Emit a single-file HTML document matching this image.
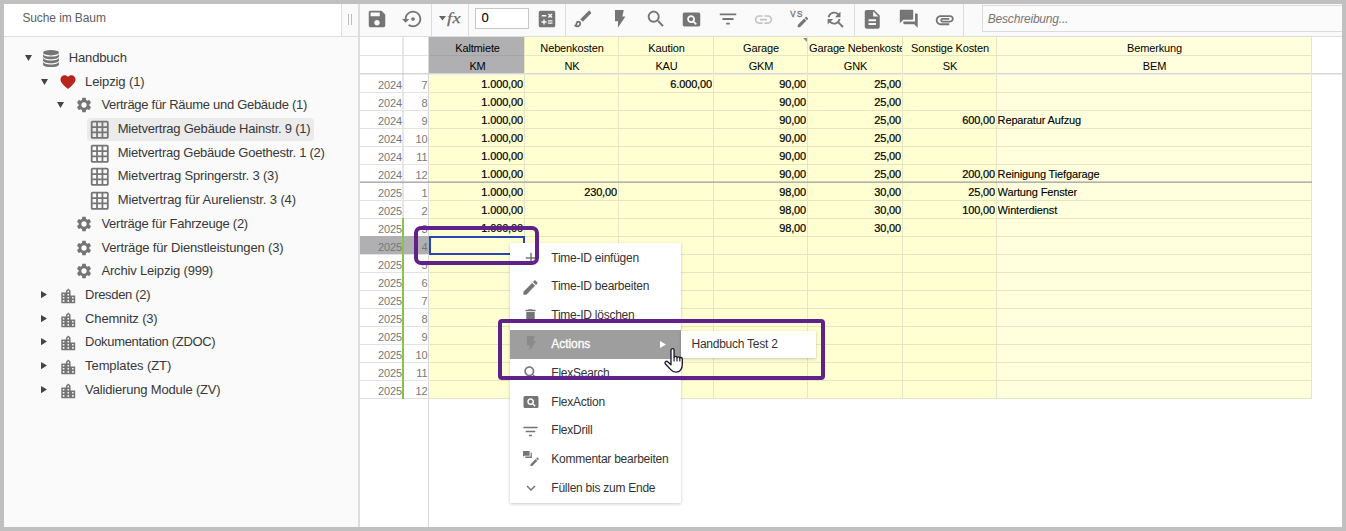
<!DOCTYPE html>
<html><head><meta charset="utf-8"><title>Handbuch</title>
<style>
html,body{margin:0;padding:0}
body{width:1346px;height:531px;overflow:hidden;background:#c0c0c0;position:relative;font-family:"Liberation Sans",sans-serif;}
div,span,svg{position:absolute;box-sizing:border-box}
.ic{display:block;overflow:visible}
#app{left:4px;top:4px;width:1338px;height:523px;background:#fff;overflow:hidden}
.t{white-space:nowrap;font-size:13px;letter-spacing:-0.25px;color:#383838;line-height:15px;height:15px}
.h{white-space:nowrap;overflow:hidden;font-size:11px;letter-spacing:-0.14px;color:#000;text-align:center;line-height:18px;height:18px}
.c{white-space:nowrap;overflow:hidden;font-size:11px;letter-spacing:-0.14px;color:#000;line-height:18px;height:18px;-webkit-text-stroke:0.12px #000}
.r{text-align:right;-webkit-text-stroke:0.22px #000}
.rl{white-space:nowrap;font-size:11px;letter-spacing:-0.1px;color:#777;text-align:right;line-height:18px;height:18px}
.m{white-space:nowrap;font-size:12px;letter-spacing:-0.25px;color:#333;line-height:16px;height:16px}
</style></head><body>
<div id="app">

<div style="left:0;top:0;width:337px;height:32px;background:#fff"></div>
<div style="left:0;top:32px;width:355px;height:1px;background:#ddd"></div>
<div style="left:0;top:33px;width:354px;height:490px;background:#fafafa"></div>
<div class="t" style="left:18.4px;top:6px;font-size:12px;line-height:16px;letter-spacing:-0.1px;color:#606060">Suche im Baum</div>
<div style="left:337px;top:0;width:1px;height:32px;background:#ddd"></div>
<div style="left:338px;top:0;width:16px;height:32px;background:#fafafa"></div>
<div style="left:344px;top:9.5px;width:1.3px;height:11.5px;background:#bcbcbc"></div>
<div style="left:347px;top:9.5px;width:1.3px;height:11.5px;background:#bcbcbc"></div>
<div style="left:354px;top:0;width:2px;height:523px;background:#dedede"></div>
<div style="left:83px;top:114px;width:227px;height:23px;background:#ebebeb;border-radius:4px"></div>
<svg class="ic" style="left:20.5px;top:50.8px;width:7px;height:6px" viewBox="0 0 7 6"><path fill="#444" d="M0 0h7L3.5 6z"/></svg>
<svg class="ic" style="left:39px;top:46.4px;width:16px;height:18px" viewBox="0 0 16 18"><g fill="#757575"><ellipse cx="8" cy="2.7" rx="8" ry="2.7"/><path d="M0 3.9c0 1.530 3.600 2.700 8 2.700s8-1.170 8-2.700v2.7c0 1.530-3.600 2.700-8 2.700s-8-1.170-8-2.700z"/><path d="M0 7.8c0 1.530 3.600 2.700 8 2.700s8-1.170 8-2.700v2.7c0 1.530-3.600 2.700-8 2.700s-8-1.170-8-2.700z"/><path d="M0 11.7c0 1.530 3.600 2.700 8 2.700s8-1.170 8-2.700v2.7c0 1.530-3.600 2.700-8 2.700s-8-1.170-8-2.700z"/></g></svg>
<div class="t" style="left:64.8px;top:46px;letter-spacing:-0.169px">Handbuch</div>
<svg class="ic" style="left:36.7px;top:74.8px;width:7px;height:6px" viewBox="0 0 7 6"><path fill="#444" d="M0 0h7L3.5 6z"/></svg>
<svg class="ic" style="left:54.60px;top:68.80px;width:18px;height:18px" viewBox="0 0 24 24"><path fill="#b8241c" fill-rule="evenodd" d="M12 21.350l-1.450-1.320C5.400 15.360 2 12.280 2 8.500 2 5.420 4.420 3 7.500 3c1.740 0 3.410.810 4.500 2.090C13.090 3.810 14.760 3 16.500 3 19.580 3 22 5.420 22 8.500c0 3.780-3.400 6.860-8.550 11.540L12 21.350z"/></svg>
<div class="t" style="left:81.1px;top:70px;letter-spacing:-0.12px">Leipzig (1)</div>
<svg class="ic" style="left:52.9px;top:97.8px;width:7px;height:6px" viewBox="0 0 7 6"><path fill="#444" d="M0 0h7L3.5 6z"/></svg>
<svg class="ic" style="left:70.60px;top:92.40px;width:18px;height:18px" viewBox="0 0 24 24"><path fill="#757575" fill-rule="evenodd" d="M19.140 12.940c.040-.300.060-.610.060-.940 0-.320-.020-.640-.070-.940l2.030-1.580c.180-.140.230-.410.120-.610l-1.920-3.320c-.120-.220-.370-.290-.590-.220l-2.390.960c-.500-.380-1.030-.700-1.620-.940l-.360-2.540c-.040-.240-.240-.410-.480-.410h-3.840c-.240 0-.430.170-.470.410l-.360 2.540c-.590.240-1.130.570-1.620.940l-2.390-.960c-.220-.080-.470 0-.590.220L2.740 8.870c-.120.210-.080.470.120.610l2.030 1.580c-.050.300-.090.630-.090.940s.020.640.070.940l-2.030 1.580c-.180.140-.230.410-.120.610l1.920 3.320c.120.220.370.290.590.220l2.390-.960c.500.380 1.030.700 1.620.940l.360 2.540c.050.240.240.410.480.410h3.840c.240 0 .440-.170.470-.410l.360-2.540c.590-.240 1.130-.560 1.620-.940l2.390.960c.220.080.470 0 .590-.220l1.920-3.320c.120-.220.070-.470-.120-.610l-2.010-1.580zM12 15.600c-1.980 0-3.600-1.620-3.600-3.600s1.620-3.600 3.600-3.600 3.600 1.620 3.600 3.600-1.620 3.600-3.600 3.600z"/></svg>
<div class="t" style="left:97.4px;top:93px;letter-spacing:-0.287px">Verträge für Räume und Gebäude (1)</div>
<svg class="ic" style="left:85.15px;top:115.05px;width:21.5px;height:21.5px" viewBox="0 0 24 24"><path fill="#757575" fill-rule="evenodd" d="M20 2H4c-1.100 0-2 .900-2 2v16c0 1.100.900 2 2 2h16c1.100 0 2-.900 2-2V4c0-1.100-.900-2-2-2zM8 20H4v-4h4v4zm0-6H4v-4h4v4zm0-6H4V4h4v4zm6 12h-4v-4h4v4zm0-6h-4v-4h4v4zm0-6h-4V4h4v4zm6 12h-4v-4h4v4zm0-6h-4v-4h4v4zm0-6h-4V4h4v4z"/></svg>
<div class="t" style="left:113.7px;top:117px;letter-spacing:-0.217px">Mietvertrag Gebäude Hainstr. 9 (1)</div>
<svg class="ic" style="left:85.15px;top:139.05px;width:21.5px;height:21.5px" viewBox="0 0 24 24"><path fill="#757575" fill-rule="evenodd" d="M20 2H4c-1.100 0-2 .900-2 2v16c0 1.100.900 2 2 2h16c1.100 0 2-.900 2-2V4c0-1.100-.900-2-2-2zM8 20H4v-4h4v4zm0-6H4v-4h4v4zm0-6H4V4h4v4zm6 12h-4v-4h4v4zm0-6h-4v-4h4v4zm0-6h-4V4h4v4zm6 12h-4v-4h4v4zm0-6h-4v-4h4v4zm0-6h-4V4h4v4z"/></svg>
<div class="t" style="left:113.7px;top:141px;letter-spacing:-0.253px">Mietvertrag Gebäude Goethestr. 1 (2)</div>
<svg class="ic" style="left:85.15px;top:162.05px;width:21.5px;height:21.5px" viewBox="0 0 24 24"><path fill="#757575" fill-rule="evenodd" d="M20 2H4c-1.100 0-2 .900-2 2v16c0 1.100.900 2 2 2h16c1.100 0 2-.900 2-2V4c0-1.100-.900-2-2-2zM8 20H4v-4h4v4zm0-6H4v-4h4v4zm0-6H4V4h4v4zm6 12h-4v-4h4v4zm0-6h-4v-4h4v4zm0-6h-4V4h4v4zm6 12h-4v-4h4v4zm0-6h-4v-4h4v4zm0-6h-4V4h4v4z"/></svg>
<div class="t" style="left:113.7px;top:164px;letter-spacing:-0.16px">Mietvertrag Springerstr. 3 (3)</div>
<svg class="ic" style="left:85.15px;top:186.05px;width:21.5px;height:21.5px" viewBox="0 0 24 24"><path fill="#757575" fill-rule="evenodd" d="M20 2H4c-1.100 0-2 .900-2 2v16c0 1.100.900 2 2 2h16c1.100 0 2-.900 2-2V4c0-1.100-.900-2-2-2zM8 20H4v-4h4v4zm0-6H4v-4h4v4zm0-6H4V4h4v4zm6 12h-4v-4h4v4zm0-6h-4v-4h4v4zm0-6h-4V4h4v4zm6 12h-4v-4h4v4zm0-6h-4v-4h4v4zm0-6h-4V4h4v4z"/></svg>
<div class="t" style="left:113.7px;top:188px;letter-spacing:-0.112px">Mietvertrag für Aurelienstr. 3 (4)</div>
<svg class="ic" style="left:70.60px;top:211.40px;width:18px;height:18px" viewBox="0 0 24 24"><path fill="#757575" fill-rule="evenodd" d="M19.140 12.940c.040-.300.060-.610.060-.940 0-.320-.020-.640-.070-.940l2.030-1.580c.180-.140.230-.410.120-.610l-1.920-3.320c-.120-.220-.370-.290-.590-.220l-2.390.960c-.500-.380-1.030-.700-1.620-.940l-.360-2.540c-.040-.240-.240-.410-.480-.410h-3.840c-.240 0-.430.170-.470.410l-.360 2.540c-.590.240-1.130.570-1.620.940l-2.390-.960c-.220-.080-.470 0-.590.220L2.740 8.870c-.120.210-.080.470.120.610l2.030 1.580c-.050.300-.090.630-.090.940s.020.640.070.940l-2.030 1.580c-.180.140-.230.410-.120.610l1.920 3.320c.120.220.370.290.590.220l2.390-.960c.500.380 1.030.700 1.620.940l.360 2.540c.050.240.240.410.480.410h3.840c.240 0 .440-.170.470-.410l.360-2.540c.590-.240 1.130-.560 1.620-.940l2.390.960c.220.080.470 0 .590-.220l1.920-3.320c.120-.220.070-.470-.120-.610l-2.010-1.580zM12 15.600c-1.980 0-3.600-1.620-3.600-3.600s1.620-3.600 3.600-3.600 3.600 1.620 3.600 3.600-1.620 3.600-3.600 3.600z"/></svg>
<div class="t" style="left:97.4px;top:212px;letter-spacing:-0.256px">Verträge für Fahrzeuge (2)</div>
<svg class="ic" style="left:70.60px;top:235.40px;width:18px;height:18px" viewBox="0 0 24 24"><path fill="#757575" fill-rule="evenodd" d="M19.140 12.940c.040-.300.060-.610.060-.940 0-.320-.020-.640-.070-.940l2.030-1.580c.180-.140.230-.410.120-.610l-1.920-3.320c-.120-.220-.370-.290-.590-.220l-2.390.960c-.500-.380-1.030-.700-1.620-.940l-.360-2.540c-.040-.240-.240-.410-.480-.410h-3.840c-.240 0-.430.170-.470.410l-.360 2.540c-.590.240-1.130.570-1.620.940l-2.390-.960c-.220-.080-.470 0-.590.220L2.740 8.870c-.120.210-.080.470.120.610l2.030 1.580c-.050.300-.090.630-.090.940s.020.640.070.940l-2.030 1.580c-.180.140-.230.410-.120.610l1.920 3.320c.120.220.370.290.590.220l2.390-.960c.500.380 1.030.700 1.620.940l.360 2.540c.050.240.240.410.480.410h3.840c.240 0 .440-.170.470-.410l.360-2.540c.590-.240 1.130-.560 1.620-.940l2.390.960c.220.080.470 0 .590-.220l1.920-3.320c.120-.220.070-.470-.120-.610l-2.010-1.580zM12 15.600c-1.980 0-3.600-1.620-3.600-3.600s1.620-3.600 3.600-3.600 3.600 1.620 3.600 3.600-1.620 3.600-3.600 3.600z"/></svg>
<div class="t" style="left:97.4px;top:236px;letter-spacing:-0.155px">Verträge für Dienstleistungen (3)</div>
<svg class="ic" style="left:70.60px;top:258.40px;width:18px;height:18px" viewBox="0 0 24 24"><path fill="#757575" fill-rule="evenodd" d="M19.140 12.940c.040-.300.060-.610.060-.940 0-.320-.020-.640-.070-.940l2.030-1.580c.180-.140.230-.410.120-.610l-1.920-3.320c-.120-.220-.370-.290-.590-.220l-2.390.960c-.500-.380-1.030-.700-1.620-.940l-.360-2.540c-.040-.240-.240-.410-.480-.410h-3.840c-.240 0-.430.170-.470.410l-.360 2.540c-.590.240-1.130.570-1.620.940l-2.390-.960c-.220-.080-.470 0-.590.220L2.740 8.870c-.120.210-.080.470.120.610l2.030 1.580c-.050.300-.090.630-.090.940s.020.640.070.940l-2.030 1.580c-.180.140-.230.410-.120.610l1.920 3.320c.120.220.370.290.590.220l2.390-.960c.500.380 1.030.700 1.620.940l.360 2.540c.050.240.240.410.480.410h3.840c.240 0 .440-.170.470-.410l.360-2.540c.590-.240 1.130-.560 1.620-.940l2.390.960c.220.080.470 0 .590-.220l1.920-3.320c.120-.220.070-.470-.120-.610l-2.010-1.580zM12 15.600c-1.980 0-3.600-1.620-3.600-3.600s1.620-3.600 3.600-3.600 3.600 1.620 3.600 3.600-1.620 3.600-3.600 3.600z"/></svg>
<div class="t" style="left:97.4px;top:259px;letter-spacing:-0.163px">Archiv Leipzig (999)</div>
<svg class="ic" style="left:37.2px;top:287.2px;width:6px;height:7.2px" viewBox="0 0 6 7.2"><path fill="#444" d="M0 0v7.2L6 3.6z"/></svg>
<svg class="ic" style="left:54.85px;top:282.65px;width:18.5px;height:18.5px" viewBox="0 0 24 24"><path fill="#757575" fill-rule="evenodd" d="M15 11V5l-3-3-3 3v2H3v14h18V11h-6zm-8 8H5v-2h2v2zm0-4H5v-2h2v2zm0-4H5V9h2v2zm6 8h-2v-2h2v2zm0-4h-2v-2h2v2zm0-4h-2V9h2v2zm0-4h-2V5h2v2zm6 12h-2v-2h2v2zm0-4h-2v-2h2v2z"/></svg>
<div class="t" style="left:81.1px;top:283px;letter-spacing:-0.314px">Dresden (2)</div>
<svg class="ic" style="left:37.2px;top:311.2px;width:6px;height:7.2px" viewBox="0 0 6 7.2"><path fill="#444" d="M0 0v7.2L6 3.6z"/></svg>
<svg class="ic" style="left:54.85px;top:306.65px;width:18.5px;height:18.5px" viewBox="0 0 24 24"><path fill="#757575" fill-rule="evenodd" d="M15 11V5l-3-3-3 3v2H3v14h18V11h-6zm-8 8H5v-2h2v2zm0-4H5v-2h2v2zm0-4H5V9h2v2zm6 8h-2v-2h2v2zm0-4h-2v-2h2v2zm0-4h-2V9h2v2zm0-4h-2V5h2v2zm6 12h-2v-2h2v2zm0-4h-2v-2h2v2z"/></svg>
<div class="t" style="left:81.1px;top:307px;letter-spacing:-0.165px">Chemnitz (3)</div>
<svg class="ic" style="left:37.2px;top:334.2px;width:6px;height:7.2px" viewBox="0 0 6 7.2"><path fill="#444" d="M0 0v7.2L6 3.6z"/></svg>
<svg class="ic" style="left:54.85px;top:329.65px;width:18.5px;height:18.5px" viewBox="0 0 24 24"><path fill="#757575" fill-rule="evenodd" d="M15 11V5l-3-3-3 3v2H3v14h18V11h-6zm-8 8H5v-2h2v2zm0-4H5v-2h2v2zm0-4H5V9h2v2zm6 8h-2v-2h2v2zm0-4h-2v-2h2v2zm0-4h-2V9h2v2zm0-4h-2V5h2v2zm6 12h-2v-2h2v2zm0-4h-2v-2h2v2z"/></svg>
<div class="t" style="left:81.1px;top:330px;letter-spacing:-0.313px">Dokumentation (ZDOC)</div>
<svg class="ic" style="left:37.2px;top:358.2px;width:6px;height:7.2px" viewBox="0 0 6 7.2"><path fill="#444" d="M0 0v7.2L6 3.6z"/></svg>
<svg class="ic" style="left:54.85px;top:353.65px;width:18.5px;height:18.5px" viewBox="0 0 24 24"><path fill="#757575" fill-rule="evenodd" d="M15 11V5l-3-3-3 3v2H3v14h18V11h-6zm-8 8H5v-2h2v2zm0-4H5v-2h2v2zm0-4H5V9h2v2zm6 8h-2v-2h2v2zm0-4h-2v-2h2v2zm0-4h-2V9h2v2zm0-4h-2V5h2v2zm6 12h-2v-2h2v2zm0-4h-2v-2h2v2z"/></svg>
<div class="t" style="left:81.1px;top:354px;letter-spacing:-0.093px">Templates (ZT)</div>
<svg class="ic" style="left:37.2px;top:382.2px;width:6px;height:7.2px" viewBox="0 0 6 7.2"><path fill="#444" d="M0 0v7.2L6 3.6z"/></svg>
<svg class="ic" style="left:54.85px;top:377.65px;width:18.5px;height:18.5px" viewBox="0 0 24 24"><path fill="#757575" fill-rule="evenodd" d="M15 11V5l-3-3-3 3v2H3v14h18V11h-6zm-8 8H5v-2h2v2zm0-4H5v-2h2v2zm0-4H5V9h2v2zm6 8h-2v-2h2v2zm0-4h-2v-2h2v2zm0-4h-2V9h2v2zm0-4h-2V5h2v2zm6 12h-2v-2h2v2zm0-4h-2v-2h2v2z"/></svg>
<div class="t" style="left:81.1px;top:378px;letter-spacing:-0.165px">Validierung Module (ZV)</div>
<div style="left:356px;top:0;width:982px;height:32px;background:#fafafa"></div>
<div style="left:355px;top:32px;width:983px;height:1px;background:#ddd"></div>
<div style="left:427.0px;top:0;width:1px;height:32px;background:#ddd"></div>
<div style="left:464.0px;top:0;width:1px;height:32px;background:#ddd"></div>
<div style="left:561.0px;top:0;width:1px;height:32px;background:#ddd"></div>
<div style="left:850.0px;top:0;width:1px;height:32px;background:#ddd"></div>
<div style="left:959.0px;top:0;width:1px;height:32px;background:#ddd"></div>
<svg class="ic" style="left:362.00px;top:4.00px;width:22px;height:22px" viewBox="0 0 24 24"><path fill="#757575" fill-rule="evenodd" d="M17 3H5c-1.11 0-2 .9-2 2v14c0 1.1.89 2 2 2h14c1.1 0 2-.9 2-2V7l-4-4zm-5 16c-1.66 0-3-1.34-3-3s1.34-3 3-3 3 1.34 3 3-1.34 3-3 3zm3-10H5V5h10v4z"/></svg>
<svg class="ic" style="left:397.60px;top:4.00px;width:22px;height:22px" viewBox="0 0 24 24"><path fill="#757575" fill-rule="evenodd" d="M14 12c0-1.1-.9-2-2-2s-2 .9-2 2 .9 2 2 2 2-.9 2-2zm-2-9c-4.97 0-9 4.03-9 9H0l4 4 4-4H5c0-3.87 3.13-7 7-7s7 3.13 7 7-3.13 7-7 7c-1.51 0-2.91-.49-4.06-1.3l-1.42 1.44C8.04 20.3 9.94 21 12 21c4.97 0 9-4.03 9-9s-4.03-9-9-9z"/></svg>
<svg class="ic" style="left:531.90px;top:4.00px;width:22px;height:22px" viewBox="0 0 24 24"><path fill="#757575" fill-rule="evenodd" d="M19 3H5c-1.1 0-2 .9-2 2v14c0 1.1.9 2 2 2h14c1.1 0 2-.9 2-2V5c0-1.1-.9-2-2-2zm-5.970 4.060L14.090 6l1.410 1.410L16.910 6l1.060 1.060-1.410 1.410 1.410 1.410-1.060 1.060-1.410-1.400-1.410 1.410-1.060-1.060 1.410-1.410-1.410-1.420zm-6.780.660h5v1.500h-5v-1.500zM11.500 16h-2v2H8v-2H6v-1.500h2v-2h1.500v2h2V16zm6.500 1.250h-5v-1.500h5v1.500zm0-2.500h-5v-1.500h5v1.500z"/></svg>
<svg class="ic" style="left:568.30px;top:4.00px;width:22px;height:22px" viewBox="0 0 24 24"><path fill="#757575" fill-rule="evenodd" d="M7 16c.550 0 1 .450 1 1 0 1.100-.900 2-2 2-.170 0-.330-.020-.500-.050.310-.550.500-1.210.500-1.950 0-.550.450-1 1-1zM18.670 3c-.260 0-.510.100-.710.290L9 12.250 11.750 15l8.960-8.960c.390-.390.390-1.020 0-1.410l-1.340-1.340c-.200-.200-.450-.290-.700-.290zM7 14c-1.660 0-3 1.340-3 3 0 1.310-1.160 2-2 2 .920 1.220 2.490 2 4 2 2.210 0 4-1.790 4-4 0-1.660-1.340-3-3-3z"/></svg>
<svg class="ic" style="left:640.60px;top:4.20px;width:22px;height:22px" viewBox="0 0 24 24"><path fill="#757575" fill-rule="evenodd" d="M15.500 14h-.790l-.280-.270C15.410 12.590 16 11.110 16 9.500 16 5.910 13.090 3 9.500 3S3 5.910 3 9.500 5.910 16 9.500 16c1.610 0 3.090-.590 4.230-1.570l.270.280v.790l5 4.990L20.490 19l-4.990-5zm-6 0C7.010 14 5 11.990 5 9.500S7.010 5 9.500 5 14 7.010 14 9.500 11.990 14 9.500 14z"/></svg>
<svg class="ic" style="left:676.90px;top:4.50px;width:21px;height:21px" viewBox="0 0 24 24"><path fill="#757575" fill-rule="evenodd" d="M11.500 9C10.120 9 9 10.120 9 11.500s1.120 2.500 2.500 2.500 2.500-1.120 2.500-2.500S12.880 9 11.500 9zM20 4H4c-1.100 0-2 .900-2 2v12c0 1.100.900 2 2 2h16c1.100 0 2-.900 2-2V6c0-1.100-.900-2-2-2zm-3.210 14.210l-2.910-2.910c-.690.440-1.510.700-2.390.700C9.010 16 7 13.990 7 11.500S9.010 7 11.500 7 16 9.010 16 11.500c0 .880-.260 1.690-.700 2.390l2.910 2.900-1.420 1.420z"/></svg>
<svg class="ic" style="left:712.50px;top:4.00px;width:22px;height:22px" viewBox="0 0 24 24"><path fill="#757575" fill-rule="evenodd" d="M10 18h4v-2h-4v2zM3 6v2h18V6H3zm3 7h12v-2H6v2z"/></svg>
<svg class="ic" style="left:749.00px;top:4.70px;width:21px;height:21px" viewBox="0 0 24 24"><path fill="#c4c4c4" fill-rule="evenodd" d="M3.900 12c0-1.710 1.390-3.100 3.100-3.100h4V7H7c-2.760 0-5 2.240-5 5s2.240 5 5 5h4v-1.900H7c-1.710 0-3.100-1.390-3.100-3.100zM8 13h8v-2H8v2zm9-6h-4v1.900h4c1.710 0 3.100 1.390 3.100 3.100s-1.390 3.100-3.100 3.100h-4V17h4c2.760 0 5-2.240 5-5s-2.240-5-5-5z"/></svg>
<svg class="ic" style="left:820.40px;top:4.00px;width:22px;height:22px" viewBox="0 0 24 24"><path fill="#757575" fill-rule="evenodd" d="M11 6c1.380 0 2.630.560 3.540 1.460L12 10h6V4l-2.050 2.050C14.680 4.780 12.930 4 11 4c-3.530 0-6.430 2.610-6.920 6H6.100c.460-2.280 2.480-4 4.900-4zm5.640 9.140c.660-.900 1.120-1.970 1.280-3.140H15.900c-.460 2.280-2.480 4-4.900 4-1.380 0-2.630-.560-3.540-1.460L10 12H4v6l2.050-2.050C7.320 17.220 9.070 18 11 18c1.550 0 2.980-.510 4.140-1.360L20 21.490 21.490 20l-4.850-4.860z"/></svg>
<svg class="ic" style="left:857.25px;top:3.75px;width:22.5px;height:22.5px" viewBox="0 0 24 24"><path fill="#757575" fill-rule="evenodd" d="M14 2H6c-1.100 0-1.990.900-1.990 2L4 20c0 1.100.890 2 1.990 2H18c1.100 0 2-.900 2-2V8l-6-6zm2 16H8v-2h8v2zm0-4H8v-2h8v2zm-3-5V3.500L18.500 9H13z"/></svg>
<svg class="ic" style="left:893.95px;top:4.25px;width:21.5px;height:21.5px" viewBox="0 0 24 24"><path fill="#757575" fill-rule="evenodd" d="M21 6h-2v9H6v2c0 .550.450 1 1 1h11l4 4V7c0-.550-.450-1-1-1zm-4 6V3c0-.550-.450-1-1-1H3c-.550 0-1 .450-1 1v14l4-4h10c.550 0 1-.450 1-1z"/></svg>
<svg class="ic" style="left:930.25px;top:4.55px;width:21.5px;height:21.5px" viewBox="0 0 24 24"><path fill="#757575" fill-rule="evenodd" d="M2 12.500C2 9.460 4.460 7 7.500 7H18c2.210 0 4 1.790 4 4s-1.790 4-4 4H9.500C8.120 15 7 13.880 7 12.500S8.120 10 9.500 10H17v2H9.410c-.550 0-.550 1 0 1H18c1.100 0 2-.900 2-2s-.900-2-2-2H7.500C5.570 9 4 10.570 4 12.500S5.570 16 7.500 16H17v2H7.500C4.460 18 2 15.540 2 12.500z"/></svg>
<svg class="ic" style="left:610.9px;top:5.6px;width:10.5px;height:17.8px" viewBox="0 0 10.5 17.8"><path fill="#757575" d="M0 0h8.760L7.340 6.500h3.110L2.820 17.800 3.100 11.300H0z"/></svg>
<svg class="ic" style="left:435px;top:12px;width:7px;height:5px" viewBox="0 0 7 5"><path fill="#666" d="M0 0h7L3.500 4.500z"/></svg>
<div style="left:442.8px;top:2.5px;transform:scaleX(1.22);transform-origin:0 0;font-family:'Liberation Serif',serif;font-style:italic;font-size:15px;line-height:22px;color:#6a6a6a;-webkit-text-stroke:0.25px #6a6a6a;letter-spacing:0.3px">fx</div>
<div style="left:471px;top:4px;width:54px;height:21px;background:#fff;border:1px solid #c8c8c8"></div>
<div class="c" style="left:477.5px;top:5px;font-size:13px;line-height:17px;height:17px;letter-spacing:0">0</div>
<svg class="ic" style="left:785.7px;top:5.199999999999999px;width:14px;height:9px" viewBox="0 0 165 90" preserveAspectRatio="none"><text x="2" y="78" font-family="Liberation Sans, sans-serif" font-size="95" fill="#757575" stroke="#757575" stroke-width="4"><tspan>V</tspan><tspan x="82">S</tspan></text></svg>
<svg class="ic" style="left:792.05px;top:10.90px;width:13.9px;height:13.9px" viewBox="0 0 24 24"><path fill="#757575" fill-rule="evenodd" d="M3 17.250V21h3.750L17.810 9.940l-3.750-3.750L3 17.250zM20.710 7.040c.390-.390.390-1.020 0-1.410l-2.340-2.340c-.390-.390-1.020-.390-1.410 0l-1.830 1.830 3.750 3.750 1.830-1.830z"/></svg>
<div style="left:978px;top:1px;width:370px;height:27px;background:#fbfbfb;border:1px solid #dcdcdc"></div>
<div class="t" style="left:983.8px;top:7px;font-size:12px;line-height:16px;font-style:italic;color:#777;letter-spacing:-0.2px">Beschreibung...</div>
<div style="left:398px;top:33px;width:2px;height:362px;background:#e7e7e7"></div>
<div style="left:424px;top:33px;width:1px;height:490px;background:#d8d8d8"></div>
<div style="left:425px;top:33px;width:883px;height:36px;background:#ffffd2"></div>
<div style="left:992px;top:33px;width:316px;height:36px;background:#ffffde"></div>
<div style="left:425px;top:33px;width:95px;height:36px;background:#b0b0b2"></div>
<div style="left:425px;top:71px;width:883px;height:324px;background:#ffffd2"></div>
<div style="left:992px;top:71px;width:316px;height:324px;background:#ffffde"></div>
<div style="left:356px;top:69px;width:982px;height:1px;background:#d6d6d6"></div>
<div style="left:356px;top:70px;width:982px;height:1px;background:rgba(0,0,0,0.07)"></div>
<div style="left:356px;top:51px;width:69px;height:1px;background:#e2e2e2"></div>
<div style="left:520px;top:51px;width:788px;height:1px;background:#e6e6c4"></div>
<div style="left:425px;top:51px;width:95px;height:1px;background:#a4a4a6"></div>
<div style="left:520px;top:33px;width:1px;height:362px;background:#e6e6c4"></div>
<div style="left:614px;top:33px;width:1px;height:362px;background:#e6e6c4"></div>
<div style="left:709px;top:33px;width:1px;height:362px;background:#e6e6c4"></div>
<div style="left:803px;top:33px;width:1px;height:362px;background:#e6e6c4"></div>
<div style="left:898px;top:33px;width:1px;height:362px;background:#e6e6c4"></div>
<div style="left:992px;top:33px;width:1px;height:362px;background:#e6e6c4"></div>
<div style="left:1307px;top:33px;width:1px;height:362px;background:#e6e6c4"></div>
<div style="left:356px;top:88px;width:69px;height:1px;background:#e2e2e2"></div>
<div style="left:425px;top:88px;width:883px;height:1px;background:#e6e6c4"></div>
<div style="left:356px;top:106px;width:69px;height:1px;background:#e2e2e2"></div>
<div style="left:425px;top:106px;width:883px;height:1px;background:#e6e6c4"></div>
<div style="left:356px;top:124px;width:69px;height:1px;background:#e2e2e2"></div>
<div style="left:425px;top:124px;width:883px;height:1px;background:#e6e6c4"></div>
<div style="left:356px;top:142px;width:69px;height:1px;background:#e2e2e2"></div>
<div style="left:425px;top:142px;width:883px;height:1px;background:#e6e6c4"></div>
<div style="left:356px;top:160px;width:69px;height:1px;background:#e2e2e2"></div>
<div style="left:425px;top:160px;width:883px;height:1px;background:#e6e6c4"></div>
<div style="left:356px;top:178px;width:69px;height:1px;background:#e2e2e2"></div>
<div style="left:425px;top:178px;width:883px;height:1px;background:#e6e6c4"></div>
<div style="left:356px;top:196px;width:69px;height:1px;background:#e2e2e2"></div>
<div style="left:425px;top:196px;width:883px;height:1px;background:#e6e6c4"></div>
<div style="left:356px;top:214px;width:69px;height:1px;background:#e2e2e2"></div>
<div style="left:425px;top:214px;width:883px;height:1px;background:#e6e6c4"></div>
<div style="left:356px;top:232px;width:69px;height:1px;background:#e2e2e2"></div>
<div style="left:425px;top:232px;width:883px;height:1px;background:#e6e6c4"></div>
<div style="left:356px;top:250px;width:69px;height:1px;background:#e2e2e2"></div>
<div style="left:425px;top:250px;width:883px;height:1px;background:#e6e6c4"></div>
<div style="left:356px;top:268px;width:69px;height:1px;background:#e2e2e2"></div>
<div style="left:425px;top:268px;width:883px;height:1px;background:#e6e6c4"></div>
<div style="left:356px;top:286px;width:69px;height:1px;background:#e2e2e2"></div>
<div style="left:425px;top:286px;width:883px;height:1px;background:#e6e6c4"></div>
<div style="left:356px;top:304px;width:69px;height:1px;background:#e2e2e2"></div>
<div style="left:425px;top:304px;width:883px;height:1px;background:#e6e6c4"></div>
<div style="left:356px;top:322px;width:69px;height:1px;background:#e2e2e2"></div>
<div style="left:425px;top:322px;width:883px;height:1px;background:#e6e6c4"></div>
<div style="left:356px;top:340px;width:69px;height:1px;background:#e2e2e2"></div>
<div style="left:425px;top:340px;width:883px;height:1px;background:#e6e6c4"></div>
<div style="left:356px;top:358px;width:69px;height:1px;background:#e2e2e2"></div>
<div style="left:425px;top:358px;width:883px;height:1px;background:#e6e6c4"></div>
<div style="left:356px;top:376px;width:69px;height:1px;background:#e2e2e2"></div>
<div style="left:425px;top:376px;width:883px;height:1px;background:#e6e6c4"></div>
<div style="left:356px;top:394px;width:69px;height:1px;background:#e2e2e2"></div>
<div style="left:425px;top:394px;width:883px;height:1px;background:#e6e6c4"></div>
<div style="left:356px;top:177px;width:952px;height:1px;background:rgba(120,120,120,0.35)"></div>
<div style="left:356px;top:178px;width:952px;height:1px;background:#b2b2b2"></div>
<div class="h" style="left:427.0px;top:34.5px;width:93.0px">Kaltmiete</div>
<div class="h" style="left:427.0px;top:52.5px;width:93.0px">KM</div>
<div class="h" style="left:522.0px;top:34.5px;width:92.0px">Nebenkosten</div>
<div class="h" style="left:522.0px;top:52.5px;width:92.0px">NK</div>
<div class="h" style="left:616.0px;top:34.5px;width:93.0px">Kaution</div>
<div class="h" style="left:616.0px;top:52.5px;width:93.0px">KAU</div>
<div class="h" style="left:711.0px;top:34.5px;width:92.0px">Garage</div>
<div class="h" style="left:711.0px;top:52.5px;width:92.0px">GKM</div>
<div class="h" style="left:805.0px;top:34.5px;width:93.0px">Garage Nebenkosten</div>
<div class="h" style="left:805.0px;top:52.5px;width:93.0px">GNK</div>
<div class="h" style="left:900.0px;top:34.5px;width:92.0px">Sonstige Kosten</div>
<div class="h" style="left:900.0px;top:52.5px;width:92.0px">SK</div>
<div class="h" style="left:994.0px;top:34.5px;width:313.0px">Bemerkung</div>
<div class="h" style="left:994.0px;top:52.5px;width:313.0px">BEM</div>
<svg class="ic" style="left:799px;top:33.6px;width:4px;height:4px" viewBox="0 0 4 4"><path fill="#8a8a96" d="M0 0h4v4z"/></svg>
<div class="rl" style="left:358px;top:72px;width:40px">2024</div>
<div class="rl" style="left:401px;top:72px;width:22.5px">7</div>
<div class="c r" style="left:425.0px;top:70.5px;width:94.0px">1.000,00</div>
<div class="c r" style="left:614.0px;top:70.5px;width:94.0px">6.000,00</div>
<div class="c r" style="left:709.0px;top:70.5px;width:93.0px">90,00</div>
<div class="c r" style="left:803.0px;top:70.5px;width:94.0px">25,00</div>
<div class="rl" style="left:358px;top:90px;width:40px">2024</div>
<div class="rl" style="left:401px;top:90px;width:22.5px">8</div>
<div class="c r" style="left:425.0px;top:88.5px;width:94.0px">1.000,00</div>
<div class="c r" style="left:709.0px;top:88.5px;width:93.0px">90,00</div>
<div class="c r" style="left:803.0px;top:88.5px;width:94.0px">25,00</div>
<div class="rl" style="left:358px;top:108px;width:40px">2024</div>
<div class="rl" style="left:401px;top:108px;width:22.5px">9</div>
<div class="c r" style="left:425.0px;top:106.5px;width:94.0px">1.000,00</div>
<div class="c r" style="left:709.0px;top:106.5px;width:93.0px">90,00</div>
<div class="c r" style="left:803.0px;top:106.5px;width:94.0px">25,00</div>
<div class="c r" style="left:898.0px;top:106.5px;width:93.0px">600,00</div>
<div class="c" style="left:993.6px;top:106.5px;width:311.0px">Reparatur Aufzug</div>
<div class="rl" style="left:358px;top:126px;width:40px">2024</div>
<div class="rl" style="left:401px;top:126px;width:22.5px">10</div>
<div class="c r" style="left:425.0px;top:124.5px;width:94.0px">1.000,00</div>
<div class="c r" style="left:709.0px;top:124.5px;width:93.0px">90,00</div>
<div class="c r" style="left:803.0px;top:124.5px;width:94.0px">25,00</div>
<div class="rl" style="left:358px;top:144px;width:40px">2024</div>
<div class="rl" style="left:401px;top:144px;width:22.5px">11</div>
<div class="c r" style="left:425.0px;top:142.5px;width:94.0px">1.000,00</div>
<div class="c r" style="left:709.0px;top:142.5px;width:93.0px">90,00</div>
<div class="c r" style="left:803.0px;top:142.5px;width:94.0px">25,00</div>
<div class="rl" style="left:358px;top:162px;width:40px">2024</div>
<div class="rl" style="left:401px;top:162px;width:22.5px">12</div>
<div class="c r" style="left:425.0px;top:160.5px;width:94.0px">1.000,00</div>
<div class="c r" style="left:709.0px;top:160.5px;width:93.0px">90,00</div>
<div class="c r" style="left:803.0px;top:160.5px;width:94.0px">25,00</div>
<div class="c r" style="left:898.0px;top:160.5px;width:93.0px">200,00</div>
<div class="c" style="left:993.6px;top:160.5px;width:311.0px">Reinigung Tiefgarage</div>
<div class="rl" style="left:358px;top:180px;width:40px">2025</div>
<div class="rl" style="left:401px;top:180px;width:22.5px">1</div>
<div class="c r" style="left:425.0px;top:178.5px;width:94.0px">1.000,00</div>
<div class="c r" style="left:520.0px;top:178.5px;width:93.0px">230,00</div>
<div class="c r" style="left:709.0px;top:178.5px;width:93.0px">98,00</div>
<div class="c r" style="left:803.0px;top:178.5px;width:94.0px">30,00</div>
<div class="c r" style="left:898.0px;top:178.5px;width:93.0px">25,00</div>
<div class="c" style="left:993.6px;top:178.5px;width:311.0px">Wartung Fenster</div>
<div class="rl" style="left:358px;top:198px;width:40px">2025</div>
<div class="rl" style="left:401px;top:198px;width:22.5px">2</div>
<div class="c r" style="left:425.0px;top:196.5px;width:94.0px">1.000,00</div>
<div class="c r" style="left:709.0px;top:196.5px;width:93.0px">98,00</div>
<div class="c r" style="left:803.0px;top:196.5px;width:94.0px">30,00</div>
<div class="c r" style="left:898.0px;top:196.5px;width:93.0px">100,00</div>
<div class="c" style="left:993.6px;top:196.5px;width:311.0px">Winterdienst</div>
<div class="rl" style="left:358px;top:216px;width:40px">2025</div>
<div class="rl" style="left:401px;top:216px;width:22.5px">3</div>
<div class="c r" style="left:425.0px;top:214.5px;width:94.0px">1.000,00</div>
<div class="c r" style="left:709.0px;top:214.5px;width:93.0px">98,00</div>
<div class="c r" style="left:803.0px;top:214.5px;width:94.0px">30,00</div>
<div style="left:356px;top:232px;width:69px;height:18px;background:#b0b0b2"></div>
<div class="rl" style="left:358px;top:234px;width:40px">2025</div>
<div class="rl" style="left:401px;top:234px;width:22.5px">4</div>
<div class="rl" style="left:358px;top:252px;width:40px">2025</div>
<div class="rl" style="left:401px;top:252px;width:22.5px">5</div>
<div class="rl" style="left:358px;top:270px;width:40px">2025</div>
<div class="rl" style="left:401px;top:270px;width:22.5px">6</div>
<div class="rl" style="left:358px;top:288px;width:40px">2025</div>
<div class="rl" style="left:401px;top:288px;width:22.5px">7</div>
<div class="rl" style="left:358px;top:306px;width:40px">2025</div>
<div class="rl" style="left:401px;top:306px;width:22.5px">8</div>
<div class="rl" style="left:358px;top:324px;width:40px">2025</div>
<div class="rl" style="left:401px;top:324px;width:22.5px">9</div>
<div class="rl" style="left:358px;top:342px;width:40px">2025</div>
<div class="rl" style="left:401px;top:342px;width:22.5px">10</div>
<div class="rl" style="left:358px;top:360px;width:40px">2025</div>
<div class="rl" style="left:401px;top:360px;width:22.5px">11</div>
<div class="rl" style="left:358px;top:378px;width:40px">2025</div>
<div class="rl" style="left:401px;top:378px;width:22.5px">12</div>
<div style="left:398px;top:214px;width:2px;height:181px;background:#8bc34a"></div>
<div style="left:425px;top:232px;width:96px;height:19px;border:2px solid #2943b8"></div>
<div style="left:506px;top:239px;width:171px;height:260px;background:#fff;box-shadow:0 1px 3px rgba(0,0,0,0.22)"></div>
<div style="left:506px;top:326px;width:171px;height:29px;background:#9e9e9e"></div>
<svg class="ic" style="left:517.90px;top:245.10px;width:18px;height:18px" viewBox="0 0 24 24"><path fill="#757575" fill-rule="evenodd" d="M19 13h-6v6h-2v-6H5v-2h6V5h2v6h6v2z"/></svg>
<div class="m" style="left:547.3px;top:246px">Time-ID einfügen</div>
<svg class="ic" style="left:517.40px;top:273.50px;width:19px;height:19px" viewBox="0 0 24 24"><path fill="#757575" fill-rule="evenodd" d="M3 17.250V21h3.750L17.810 9.940l-3.750-3.750L3 17.250zM20.710 7.040c.390-.390.390-1.020 0-1.410l-2.340-2.340c-.390-.390-1.020-.390-1.410 0l-1.830 1.830 3.750 3.750 1.830-1.830z"/></svg>
<div class="m" style="left:547.3px;top:274px">Time-ID bearbeiten</div>
<svg class="ic" style="left:518.40px;top:303.20px;width:17px;height:17px" viewBox="0 0 24 24"><path fill="#757575" fill-rule="evenodd" d="M6 19c0 1.100.900 2 2 2h8c1.100 0 2-.900 2-2V7H6v12zM19 4h-3.500l-1-1h-5l-1 1H5v2h14V4z"/></svg>
<div class="m" style="left:547.3px;top:303px">Time-ID löschen</div>
<svg class="ic" style="left:522.9px;top:332.3px;width:9.3px;height:14.5px" viewBox="0 0 10.5 17.8" preserveAspectRatio="none"><path fill="#8a8a8a" d="M0 0h8.760L7.340 6.500h3.110L2.820 17.800 3.100 11.300H0z"/></svg>
<div class="m" style="left:547.3px;top:332px;color:#fff;-webkit-text-stroke:0.3px #fff;letter-spacing:-0.05px">Actions</div>
<svg class="ic" style="left:517.65px;top:359.95px;width:18.5px;height:18.5px" viewBox="0 0 24 24"><path fill="#757575" fill-rule="evenodd" d="M15.500 14h-.790l-.280-.270C15.410 12.590 16 11.110 16 9.500 16 5.910 13.090 3 9.500 3S3 5.910 3 9.500 5.910 16 9.500 16c1.610 0 3.090-.590 4.230-1.570l.270.280v.790l5 4.990L20.490 19l-4.990-5zm-6 0C7.010 14 5 11.990 5 9.500S7.010 5 9.500 5 14 7.010 14 9.500 11.990 14 9.500 14z"/></svg>
<div class="m" style="left:547.3px;top:361px">FlexSearch</div>
<svg class="ic" style="left:517.90px;top:388.90px;width:18px;height:18px" viewBox="0 0 24 24"><path fill="#757575" fill-rule="evenodd" d="M11.500 9C10.120 9 9 10.120 9 11.500s1.120 2.500 2.500 2.500 2.500-1.120 2.500-2.500S12.880 9 11.500 9zM20 4H4c-1.100 0-2 .900-2 2v12c0 1.100.900 2 2 2h16c1.100 0 2-.900 2-2V6c0-1.100-.900-2-2-2zm-3.210 14.210l-2.910-2.910c-.690.440-1.510.700-2.390.700C9.010 16 7 13.990 7 11.500S9.010 7 11.500 7 16 9.010 16 11.500c0 .880-.260 1.690-.700 2.390l2.910 2.900-1.420 1.420z"/></svg>
<div class="m" style="left:547.3px;top:390px">FlexAction</div>
<svg class="ic" style="left:517.40px;top:417.50px;width:19px;height:19px" viewBox="0 0 24 24"><path fill="#757575" fill-rule="evenodd" d="M10 18h4v-2h-4v2zM3 6v2h18V6H3zm3 7h12v-2H6v2z"/></svg>
<div class="m" style="left:547.3px;top:418px">FlexDrill</div>
<svg class="ic" style="left:519.4px;top:447.4px;width:9px;height:7px" viewBox="0 0 9 7"><g fill="#757575"><path d="M0 0h6.600v4.700H1.300L0 5.700z"/><path d="M7.600 1.600h1.200v5.300H2.300V5.600h5.300z"/></g></svg>
<svg class="ic" style="left:524.55px;top:451.60px;width:11.4px;height:11.4px" viewBox="0 0 24 24"><path fill="#757575" fill-rule="evenodd" d="M3 17.250V21h3.750L17.810 9.940l-3.750-3.750L3 17.250zM20.710 7.040c.390-.390.390-1.020 0-1.410l-2.340-2.340c-.390-.390-1.020-.390-1.410 0l-1.830 1.830 3.750 3.750 1.830-1.830z"/></svg>
<div class="m" style="left:547.3px;top:447px">Kommentar bearbeiten</div>
<svg class="ic" style="left:517.90px;top:475.00px;width:18px;height:18px" viewBox="0 0 24 24"><path fill="#757575" fill-rule="evenodd" d="M16.590 8.590L12 13.170 7.410 8.590 6 10l6 6 6-6z"/></svg>
<div class="m" style="left:547.3px;top:476px">Füllen bis zum Ende</div>
<svg class="ic" style="left:656.2px;top:336.7px;width:6px;height:7px" viewBox="0 0 6 7"><path fill="#fff" d="M0 0v7L6 3.500z"/></svg>
<div style="left:677px;top:327px;width:134.5px;height:27px;background:#fff;box-shadow:0 1px 3px rgba(0,0,0,0.22)"></div>
<div class="m" style="left:687.5px;top:332px">Handbuch Test 2</div>
<div style="left:410px;top:222px;width:125px;height:38.9px;border:4px solid #61218b;border-radius:7px"></div>
<div style="left:494px;top:315px;width:327px;height:60.9px;border:4px solid #61218b;border-radius:4px"></div>
<svg class="ic" style="left:660.2px;top:344.3px;width:20.8px;height:26px" viewBox="0 0 20 26" preserveAspectRatio="none"><path fill="#fff" stroke="#1a1a2e" stroke-width="1.3" stroke-linejoin="round" d="M6.700 2.300c0-1 .700-1.600 1.500-1.600s1.500.600 1.500 1.600v7.200c.200-.700.700-1.100 1.400-1.100.800 0 1.300.500 1.400 1.300.200-.500.700-.900 1.300-.900.800 0 1.300.500 1.400 1.300.200-.400.600-.600 1.100-.600.800 0 1.300.600 1.300 1.500v5.500c0 2.500-.700 4.200-1.500 5.300-1 1.400-2.600 2.300-4.600 2.300-2.100 0-3.600-.700-4.800-2.200L1.400 16c-.700-.900-.600-1.800 0-2.300.700-.600 1.700-.400 2.500.400l2.800 2.600z"/><path fill="none" stroke="#1a1a2e" stroke-width="1.100" d="M9.700 9.500v4M12.500 9.700v3.800M15.200 10.100v3.400"/></svg>
</div></body></html>
